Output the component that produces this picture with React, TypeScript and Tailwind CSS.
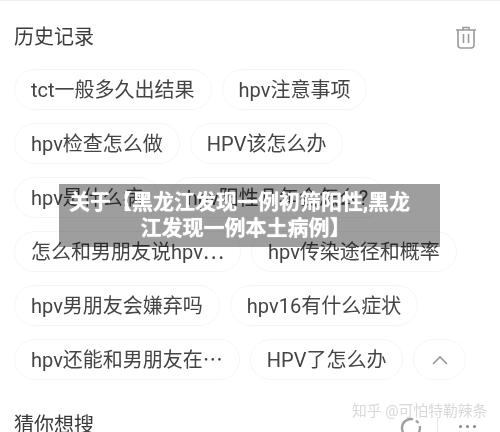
const rows: string[][] = [
  ["tct一般多久出结果", "hpv注意事项"],
  ["hpv检查怎么做", "HPV该怎么办"],
  ["hpv是什么病", "hpv阳性几年会怎么?"],
  ["怎么和男朋友说hpv⋯", "hpv传染途径和概率"],
  ["hpv男朋友会嫌弃吗", "hpv16有什么症状"],
  ["hpv还能和男朋友在⋯", "HPV了怎么办"],
];

function Chip({ children }: { children: React.ReactNode }) {
  return (
    <div className="flex h-[41px] items-center rounded-full border border-[#f5f5f5] px-4 text-[20px] whitespace-nowrap text-[#444444]">
      {children}
    </div>
  );
}

export default function App() {
  return (
    <div className="relative h-[432px] w-[500px] overflow-hidden bg-white font-['Roboto','Noto_Sans_CJK_SC',sans-serif]">
      <div className="h-px bg-[#f0f0f0]" />
      <div className="flex flex-col pl-[14px] pr-[34px] blur-[0.5px]">
        <div className="flex h-[68px] items-center justify-between pt-[4px]">
          <span className="text-[20px] text-[#3a3a3a]">历史记录</span>
          <svg width="22" height="24" viewBox="0 0 22 24" fill="none" stroke="#9a9a9a" strokeWidth="1.6" className="-mr-[11px]">
            <path d="M1 5h20M8 5V2.5h6V5M3 5v15a3 3 0 0 0 3 3h10a3 3 0 0 0 3-3V5M8.5 9v9M13.5 9v9" />
          </svg>
        </div>
        <div className="flex flex-col gap-[13px]">
          {rows.map((row, i) => (
            <div key={i} className="flex gap-[10px]">
              {row.map((t) => (
                <Chip key={t}>{t}</Chip>
              ))}
              {i === 5 && (
                <div className="flex h-[41px] w-[55px] items-center justify-center rounded-full border border-[#f5f5f5]">
                  <svg width="16" height="10" viewBox="0 0 16 10" fill="none" stroke="#9a9a9a" strokeWidth="1.6">
                    <path d="M1 9l7-7 7 7" />
                  </svg>
                </div>
              )}
            </div>
          ))}
        </div>
        <div className="mt-[30px] text-[20px] text-[#3a3a3a]">猜你想搜</div>
      </div>

      <div className="absolute top-[184px] left-[59px] flex h-[63px] w-[381px] flex-col items-center justify-center bg-black/[0.38] pr-[28px] pb-[2px] pl-[8px] text-center text-[21px] leading-[26px] font-bold whitespace-nowrap text-white blur-[0.3px] [text-shadow:0_0_1px_#ffffff]">
        <p>关于【黑龙江发现一例初筛阳性,黑龙</p>
        <p className="ml-[12px]">江发现一例本土病例】</p>
      </div>

      <div className="absolute top-[400px] left-[352px] text-[14.8px] whitespace-nowrap text-[#d8d8d8] blur-[0.3px]">
        知乎 @可怕特勒辣条
      </div>
      <svg width="22" height="22" viewBox="0 0 22 22" fill="none" stroke="#a0a0a0" strokeWidth="2.4" className="absolute top-[417px] left-[400px] blur-[0.4px]">
        <path d="M13 2.3A9 9 0 1 0 19.7 9" />
        <path d="M16 3.5l2.5 2.5" />
      </svg>
      <div className="absolute top-[418px] left-[437px] h-[14px] w-px bg-[#e6e6e6]" />
      <div className="absolute top-[425px] left-[459px] flex gap-[4.5px]">
        <div className="size-[2.5px] rounded-full bg-[#888888]" />
        <div className="size-[2.5px] rounded-full bg-[#888888]" />
        <div className="size-[2.5px] rounded-full bg-[#888888]" />
      </div>
    </div>
  );
}
